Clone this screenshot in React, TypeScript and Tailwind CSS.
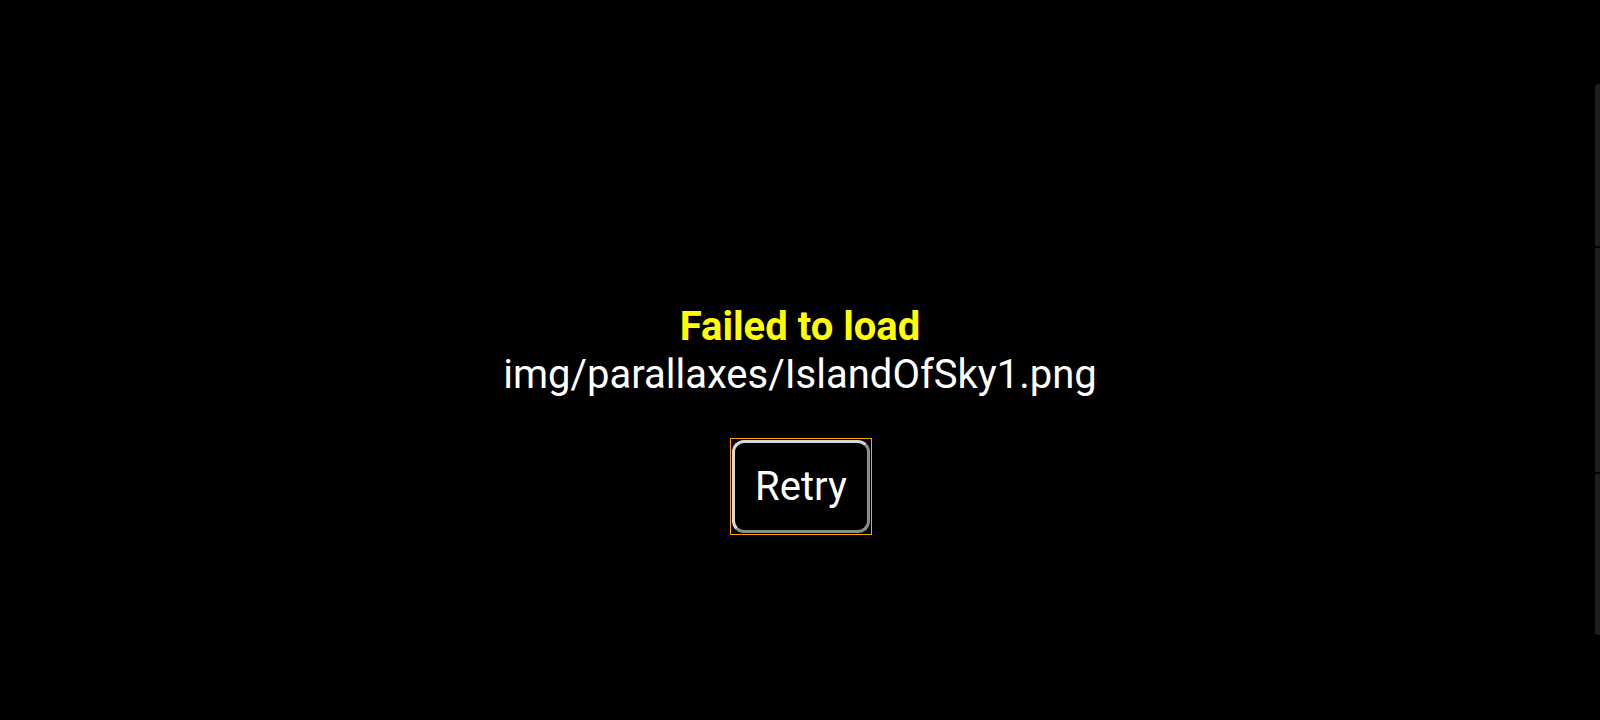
export default function App() {
  return (
    <div
      className="relative h-[720px] w-[1600px] overflow-hidden bg-black text-white"
      style={{ fontFamily: "Roboto, 'Liberation Sans', sans-serif" }}
    >
      <div className="flex flex-col items-center pt-[303px]">
        <p className="text-[40px] leading-[48px] font-bold text-[#ffff00]">Failed to load</p>
        <p className="text-[40px] leading-[48px]">img/parallaxes/IslandOfSky1.png</p>
        {/* focus ring */}
        <div className="mt-[39px] ml-[2px] border border-[#ffa500] p-[1px]">
          <button className="block w-[138px] rounded-[12px] border-[3px] border-t-[#d8d8d8] border-l-[#d8d8d8] border-r-[#8c8c8c] border-b-[#8c8c8c] bg-black pt-[20px] pb-[20px] text-[40px] leading-[47px] text-white">
            Retry
          </button>
        </div>
      </div>

      {/* side toolbar */}
      <div className="absolute right-0 top-[84px] flex w-[5px] flex-col gap-[2px]">
        <div className="h-[162px] rounded-tl-[3px] bg-[#1e1e1e]" />
        <div className="h-[224px] bg-[#1e1e1e]" />
        <div className="h-[161px] rounded-bl-[3px] bg-[#1e1e1e]" />
      </div>
    </div>
  );
}
